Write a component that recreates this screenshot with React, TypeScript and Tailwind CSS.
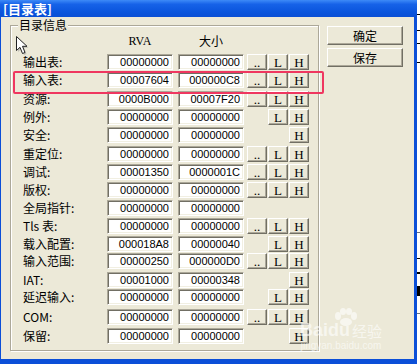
import React from "react";

type Row = {
  label: string;
  rva: string;
  size: string;
  dots: boolean;
  l: boolean;
  h: boolean;
  gap: string;
};

const rows: Row[] = [
  { label: "输出表:", rva: "00000000", size: "00000000", dots: true, l: true, h: true, gap: "mt-[0px]" },
  { label: "输入表:", rva: "00007604", size: "000000C8", dots: true, l: true, h: true, gap: "mt-[2px]" },
  { label: "资源:", rva: "0000B000", size: "00007F20", dots: true, l: true, h: true, gap: "mt-[3px]" },
  { label: "例外:", rva: "00000000", size: "00000000", dots: false, l: true, h: true, gap: "mt-[2px]" },
  { label: "安全:", rva: "00000000", size: "00000000", dots: false, l: false, h: true, gap: "mt-[2px]" },
  { label: "重定位:", rva: "00000000", size: "00000000", dots: true, l: true, h: true, gap: "mt-[3px]" },
  { label: "调试:", rva: "00001350", size: "0000001C", dots: true, l: true, h: true, gap: "mt-[2px]" },
  { label: "版权:", rva: "00000000", size: "00000000", dots: true, l: true, h: true, gap: "mt-[2px]" },
  { label: "全局指针:", rva: "00000000", size: "00000000", dots: false, l: false, h: false, gap: "mt-[2px]" },
  { label: "Tls 表:", rva: "00000000", size: "00000000", dots: true, l: true, h: true, gap: "mt-[2px]" },
  { label: "载入配置:", rva: "000018A8", size: "00000040", dots: false, l: true, h: true, gap: "mt-[2px]" },
  { label: "输入范围:", rva: "00000250", size: "000000D0", dots: true, l: true, h: true, gap: "mt-[1px]" },
  { label: "IAT:", rva: "00001000", size: "00000348", dots: false, l: false, h: true, gap: "mt-[3px]" },
  { label: "延迟输入:", rva: "00000000", size: "00000000", dots: false, l: true, h: true, gap: "mt-[1px]" },
  { label: "COM:", rva: "00000000", size: "00000000", dots: true, l: true, h: true, gap: "mt-[4px]" },
  { label: "保留:", rva: "00000000", size: "00000000", dots: false, l: false, h: true, gap: "mt-[3px]" },
];

const cjk = "font-['SimSun','Noto_Sans_CJK_SC',sans-serif]";
const serif = "font-['Liberation_Serif','Noto_Sans_CJK_SC',serif]";

function SmallBtn({ text, show }: { text: string; show: boolean }) {
  if (!show) return <div className="w-[20px] h-[16px]" />;
  return (
    <div
      className={`w-[20px] h-[16px] flex items-center justify-center bg-[#ece9d8] border border-t-white border-l-white border-r-[#716f64] border-b-[#716f64] shadow-[inset_-1px_-1px_0_#aca899] text-[13px] leading-none text-black ${serif}`}
    >
      {text}
    </div>
  );
}

function ValueBox({ value }: { value: string }) {
  return (
    <div className="w-[66px] h-[16px] bg-white border border-t-[#aca899] border-l-[#aca899] border-b-white border-r-white shadow-[inset_1px_1px_0_#716f64,inset_-1px_-1px_0_#f1efe2] text-right pr-[3px] text-[11px] leading-[14px] text-black font-['Liberation_Sans',sans-serif]">
      {value}
    </div>
  );
}

function BigBtn({ text }: { text: string }) {
  return (
    <div
      className={`w-[76px] h-[19px] flex items-center justify-center bg-[#ece9d8] border border-t-white border-l-white border-r-[#716f64] border-b-[#716f64] shadow-[inset_-1px_-1px_0_#aca899] text-[12px] leading-none text-black ${cjk}`}
    >
      {text}
    </div>
  );
}

export default function App() {
  return (
    <div className="relative w-[420px] h-[364px] bg-white flex overflow-hidden">
      {/* window */}
      <div className="w-[417px] h-[364px] flex flex-col bg-[#0b4fd8]">
        <div className="h-[17px] shrink-0 flex items-center bg-[linear-gradient(to_bottom,#3d8af7_0%,#1662e8_25%,#0a55dd_70%,#0a4fd5_100%)] pl-[3px] overflow-hidden">
          <span className={`block text-white font-bold text-[13px] leading-[15px] ${cjk}`}>[目录表]</span>
        </div>
        <div className="flex-1 ml-[1px] mr-[3px] mb-[5px] bg-[#ece9d8] flex pl-[9px] pt-[8px]">
          {/* group box */}
          <div className="relative w-[309px] h-[326px] border border-[#aca899] shadow-[inset_1px_1px_0_white,1px_1px_0_white]">
            <span className={`absolute -top-[8px] left-[7px] px-[1px] bg-[#ece9d8] text-[12px] leading-[14px] text-black ${cjk}`}>
              目录信息
            </span>
            <div className="pt-[8px] pl-[12px] flex flex-col">
              <div className="flex h-[14px] items-center">
                <div className="w-[84px]" />
                <div className={`w-[66px] text-center text-[12px] leading-[14px] text-black ${serif}`}>RVA</div>
                <div className={`ml-[5px] w-[66px] text-center text-[12px] leading-[14px] text-black ${cjk}`}>大小</div>
              </div>
              <div className="mt-[6px] flex flex-col">
                {rows.map((r) => (
                  <div key={r.label} className={`flex h-[16px] items-center ${r.gap}`}>
                    <div className={`w-[84px] text-[12px] leading-[16px] text-black whitespace-pre ${cjk}`}>{r.label}</div>
                    <ValueBox value={r.rva} />
                    <div className="ml-[5px]">
                      <ValueBox value={r.size} />
                    </div>
                    <div className="ml-[3px] flex gap-[1px]">
                      <SmallBtn text=".." show={r.dots} />
                      <SmallBtn text="L" show={r.l} />
                      <SmallBtn text="H" show={r.h} />
                    </div>
                  </div>
                ))}
              </div>
            </div>
          </div>
          {/* right buttons */}
          <div className="ml-[8px] pt-[1px] flex flex-col gap-[3px]">
            <BigBtn text="确定" />
            <BigBtn text="保存" />
          </div>
        </div>
      </div>
      {/* background window strip */}
      <div className="relative w-[3px] h-[364px] bg-white">
        <div className="absolute top-[14px] left-0 w-[3px] h-[1px] bg-black" />
        <div className="absolute top-[30px] left-0 w-[3px] h-[1px] bg-black" />
        <div className="absolute top-[43px] left-0 w-[3px] h-[1px] bg-black" />
        <div className="absolute top-[62px] left-0 w-[3px] h-[1px] bg-black" />
        <div className="absolute top-[232px] left-0 w-[3px] h-[1px] bg-gray-500" />
        <div className="absolute top-[258px] left-0 w-[3px] h-[1px] bg-black" />
        <div className="absolute top-[272px] left-0 w-[3px] h-[2px] bg-black" />
        <div className="absolute top-[286px] left-0 w-[3px] h-[10px] bg-black" />
        <div className="absolute top-[313px] left-0 w-[3px] h-[1px] bg-gray-500" />
      </div>

      {/* red highlight */}
      <div className="absolute left-[13px] top-[71px] w-[311px] h-[23px] border-2 border-[#ef3760] rounded-[2px]" />

      {/* mouse cursor */}
      <svg className="absolute left-[16px] top-[36px]" width="14" height="21" viewBox="0 0 14 21">
        <path d="M2 2 L2 16 L5.5 12.8 L8 19 L10.5 18 L8 11.8 L12.5 11.8 Z" fill="#9a9a9a" opacity="0.5" />
        <path d="M0.5 0.5 L0.5 14.5 L4 11.3 L6.5 17.5 L9 16.5 L6.5 10.3 L11 10.3 Z" fill="white" stroke="#222" strokeWidth="1" strokeLinejoin="round" />
      </svg>

      {/* watermark */}
      <div className="absolute left-[300px] top-[308px] flex flex-col items-center text-white/60 pointer-events-none">
        <svg width="28" height="18" viewBox="0 0 28 18" className="ml-[10px]">
          <ellipse cx="6" cy="8" rx="3" ry="4" fill="rgba(255,255,255,0.6)" />
          <ellipse cx="11" cy="3.5" rx="3" ry="3.5" fill="rgba(255,255,255,0.6)" />
          <ellipse cx="17" cy="3.5" rx="3" ry="3.5" fill="rgba(255,255,255,0.6)" />
          <ellipse cx="22" cy="8" rx="3" ry="4" fill="rgba(255,255,255,0.6)" />
          <ellipse cx="14" cy="14" rx="6" ry="4" fill="rgba(255,255,255,0.6)" />
        </svg>
        <div className="flex items-end -mt-[5px]">
          <span className="text-[18px] leading-[19px] font-bold font-['Liberation_Sans',sans-serif]">Baidu</span>
          <span className={`ml-[2px] text-[15px] leading-[19px] ${cjk}`}>经验</span>
        </div>
        <span className="text-[10px] leading-[12px] font-['Liberation_Sans',sans-serif]">jingyan.baidu.com</span>
      </div>
    </div>
  );
}
